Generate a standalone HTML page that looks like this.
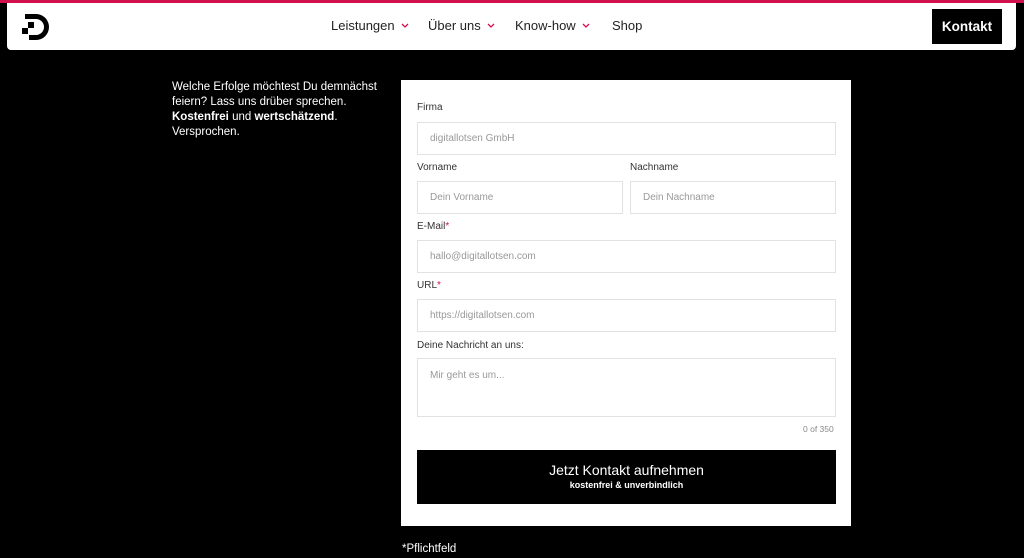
<!DOCTYPE html>
<html><head><meta charset="utf-8"><style>
*{box-sizing:border-box;margin:0;padding:0}
body{width:1024px;height:558px;background:#000;font-family:"Liberation Sans",sans-serif;position:relative;overflow:hidden}
.top{position:absolute;left:0;top:0;width:1024px;height:3px;background:#d3104f}
.hdr{position:absolute;left:7px;top:3px;width:1009px;height:47px;background:#fff;border-radius:0 0 4px 4px}
.nav{position:absolute;top:15px;font-size:13px;color:#222}
.nav svg{margin-left:6px;vertical-align:2px}
.kb{position:absolute;left:925px;top:6px;width:70px;height:35px;background:#000;color:#fff;font-size:13.5px;font-weight:bold;text-align:center;line-height:35px}
.intro{position:absolute;left:172px;top:80px;color:#fff;font-size:11.5px;line-height:15px;width:225px}
.form{position:absolute;left:401px;top:80px;width:450px;height:446px;background:#fff}
.l{position:absolute;font-size:10px;color:#333}
.l i{color:#d3104f;font-style:normal}
.in{position:absolute;border:1px solid #e2e2e2;font-size:10px;color:#999;padding-left:12px;line-height:31px}
.btn{position:absolute;left:16px;top:370px;width:419px;height:54px;background:#000;color:#fff;text-align:center}
</style></head><body>
<div class="top"></div>
<div class="hdr">
<svg style="position:absolute;left:13px;top:9px" width="34" height="32" viewBox="0 0 34 32"><path d="M5 2h11a13 13 0 0 1 0 26H9v-5h7a8 8 0 0 0 0-16H5z" fill="#000"/><rect x="8" y="10" width="6" height="6" fill="#000"/><rect x="2" y="16" width="6" height="6" fill="#000"/></svg>
<div class="nav" style="left:324px">Leistungen<svg width="8" height="5" viewBox="0 0 8 5"><path d="M1 1l3 3 3-3" stroke="#d3104f" stroke-width="1.3" fill="none"/></svg></div>
<div class="nav" style="left:421px">Über uns<svg width="8" height="5" viewBox="0 0 8 5"><path d="M1 1l3 3 3-3" stroke="#d3104f" stroke-width="1.3" fill="none"/></svg></div>
<div class="nav" style="left:508px">Know-how<svg width="8" height="5" viewBox="0 0 8 5"><path d="M1 1l3 3 3-3" stroke="#d3104f" stroke-width="1.3" fill="none"/></svg></div>
<div class="nav" style="left:605px">Shop</div>
<div class="kb">Kontakt</div>
</div>
<div class="intro">Welche Erfolge möchtest Du demnächst feiern? Lass uns drüber sprechen. <b>Kostenfrei</b> und <b>wertschätzend</b>. Versprochen.</div>
<div class="form">
<div class="l" style="left:16px;top:22px">Firma</div>
<div class="in" style="left:16px;top:42px;width:419px;height:33px">digitallotsen GmbH</div>
<div class="l" style="left:16px;top:82px">Vorname</div>
<div class="l" style="left:229px;top:82px">Nachname</div>
<div class="in" style="left:16px;top:101px;width:206px;height:33px">Dein Vorname</div>
<div class="in" style="left:229px;top:101px;width:206px;height:33px">Dein Nachname</div>
<div class="l" style="left:16px;top:141px">E-Mail<i>*</i></div>
<div class="in" style="left:16px;top:160px;width:419px;height:33px">hallo@digitallotsen.com</div>
<div class="l" style="left:16px;top:200px">URL<i>*</i></div>
<div class="in" style="left:16px;top:219px;width:419px;height:33px">https://digitallotsen.com</div>
<div class="l" style="left:16px;top:260px">Deine Nachricht an uns:</div>
<div class="in" style="left:16px;top:278px;width:419px;height:59px;line-height:34px">Mir geht es um...</div>
<div class="l" style="left:402px;top:344px;font-size:8.5px;color:#888">0 of 350</div>
<div class="btn"><div style="font-size:14px;margin-top:12px">Jetzt Kontakt aufnehmen</div><div style="font-size:9px;font-weight:bold;margin-top:2px">kostenfrei &amp; unverbindlich</div></div>
</div>
<div style="position:absolute;left:402px;top:543px;color:#fff;font-size:11.5px">*Pflichtfeld</div>
</body></html>
